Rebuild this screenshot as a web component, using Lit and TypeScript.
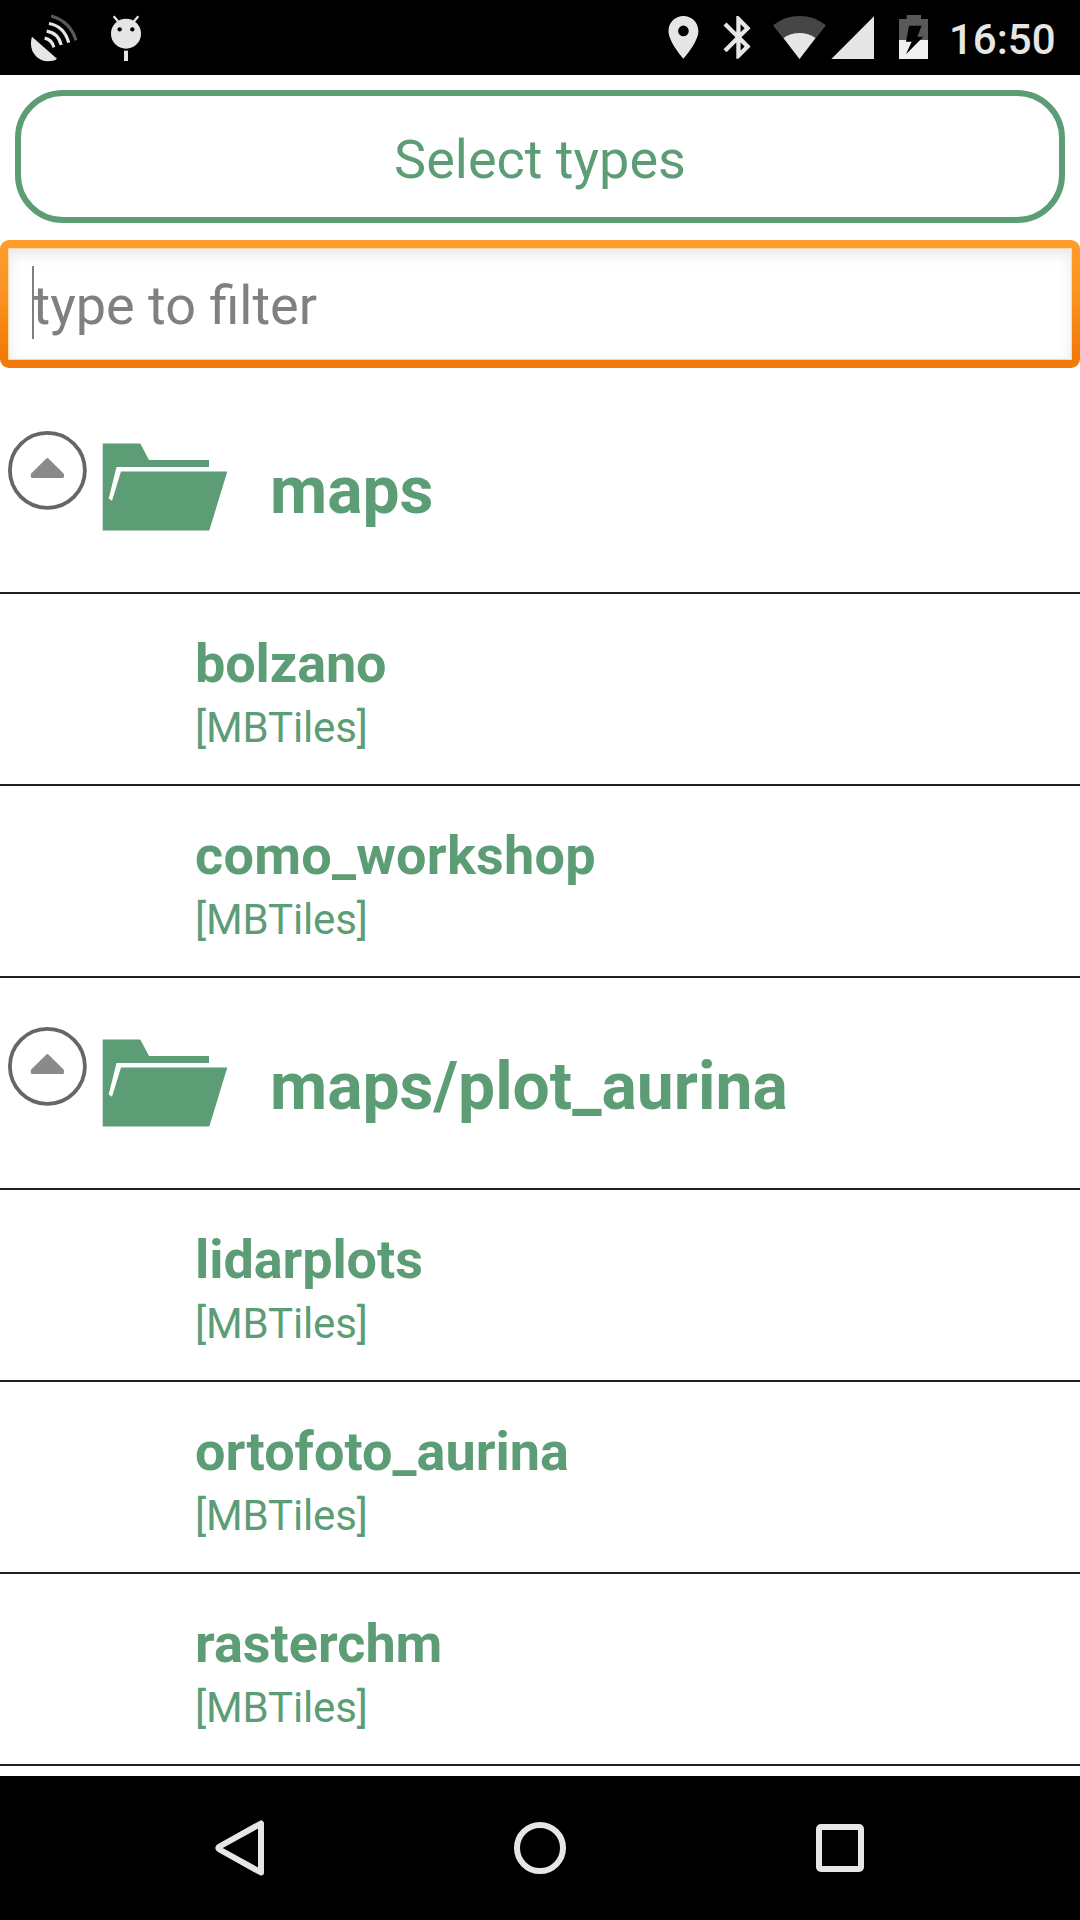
import { LitElement, html, css, svg } from "lit";
import { customElement, property, state } from "lit/decorators.js";

interface MapSource {
  name: string;
  type: string;
  tracking?: number;
}

interface MapFolder {
  path: string;
  sources: MapSource[];
}

@customElement("status-bar")
class StatusBar extends LitElement {
  @property() time = "";

  static styles = css`
    :host {
      display: flex;
      justify-content: space-between;
      height: 75px;
      background: #000;
      color: #e6e6e6;
    }
    .icons {
      display: block;
      height: 75px;
    }
    .right {
      display: flex;
    }
    .clock {
      width: 131px;
      margin-left: -1px;
      font: 500 42px/50px Roboto, sans-serif;
      padding-top: 15px;
      white-space: nowrap;
    }
  `;

  render() {
    return html`
      <svg class="icons" width="200" height="75" viewBox="0 0 600 225">
        <path fill="#e6e6e6" d="M96 110L171 176.500C166 182 153 184 144 184A52 52 0 0 1 93 132C93 124 94 115 96 110Z" />
        <g fill="none" stroke="#e6e6e6" stroke-width="9.500">
          <path d="M134 114.500Q156 119 161.500 142" />
          <path d="M140 93.500Q175 99 183.500 135" />
          <path d="M147 70.500Q193 79 206 128" />
          <path d="M153 48Q211 64 228 121" stroke="#595959" />
        </g>
        <circle cx="378" cy="101" r="45" fill="#e6e6e6" />
        <path d="M341 49L355 65M415 49L401 65" stroke="#e6e6e6" stroke-width="7" />
        <circle cx="359" cy="88" r="6.500" />
        <circle cx="397" cy="88" r="6.500" />
        <path fill="#e6e6e6" d="M372 152h12v31h-12z" />
      </svg>
      <div class="right">
        <svg class="icons" width="310" height="75" viewBox="0 0 930 225">
          <g fill="#e6e6e6">
            <path
              transform="translate(53.500 35.200) scale(6.400)"
              d="M12 2C8.130 2 5 5.130 5 9c0 5.250 7 13 7 13s7-7.750 7-13c0-3.870-3.130-7-7-7zm0 9.500a2.500 2.500 0 1 1 0-5 2.500 2.500 0 0 1 0 5z"
            />
            <path
              transform="translate(218.500 35.200) scale(6.400)"
              d="M17.710 7.710L12 2h-1v7.590L6.410 5 5 6.410 10.590 12 5 17.590 6.410 19 11 14.410V22h1l5.710-5.710-4.300-4.290 4.300-4.290zM13 5.830l1.880 1.880L13 9.590V5.830zm1.880 10.460L13 18.170v-3.760l1.880 1.880z"
            />
            <path fill="#464646" d="M478.500 177L399 76Q434 48 478.500 48T558 76Z" />
            <path d="M478.500 177L430.500 114Q452 99 478.500 99T526.500 114Z" />
            <path d="M574 177L702 49V177Z" />
          </g>
          <path fill="#595959" d="M800 45h43v12h21v63h-87v-63h23z" />
          <path fill="#f0f0f0" d="M777 120h87v57h-87z" />
          <path d="M807 77H845L832 110H850L798 163L815 125H798Z" />
        </svg>
        <span class="clock">${this.time}</span>
      </div>
    `;
  }
}

@customElement("folder-header")
class FolderHeader extends LitElement {
  @property() path = "";
  @property({ type: Boolean }) collapsed = false;

  static styles = css`
    :host {
      display: flex;
      box-sizing: border-box;
      height: 212px;
      border-bottom: 2px solid #231f20;
      color: #5d9d76;
    }
    .toggle {
      display: block;
      width: 80px;
      height: 80px;
      margin: 48px 16px 0 7px;
      flex: none;
    }
    .collapsed {
      transform: scaleY(-1);
    }
    .folder {
      display: block;
      width: 126px;
      height: 88px;
      margin: 61px 42px 0 -1px;
      flex: none;
    }
    .name {
      font: 700 66px/78px Roboto, sans-serif;
      padding-top: 70px;
      white-space: nowrap;
    }
  `;

  render() {
    return html`
      <svg class="toggle ${this.collapsed ? "collapsed" : ""}" viewBox="0 0 80 80">
        <circle cx="40.400" cy="40.300" r="37.500" fill="none" stroke="#666" stroke-width="3.800" />
        <path d="M40.400 29.500L55.500 44.500V46.500H25.300V44.500Z" fill="#8a8a8a" stroke="#8a8a8a" stroke-width="3" stroke-linejoin="round" />
      </svg>
      <svg class="folder" viewBox="102 443 126 88">
        <path
          fill="#5d9d76"
          d="M102.700 443.500H140.300L149 460H209V467H116.500L108.700 498.500L112 500.700L121 471.400H227.300L209.300 530.500H102.700Z"
        />
      </svg>
      <span class="name">${this.path}</span>
    `;
  }
}

@customElement("source-row")
class SourceRow extends LitElement {
  @property() name = "";
  @property() type = "";
  @property({ type: Number }) tracking = 0;

  static styles = css`
    :host {
      display: flex;
      flex-direction: column;
      gap: 7px;
      box-sizing: border-box;
      height: 192px;
      padding: 38px 0 0 195px;
      border-bottom: 2px solid #231f20;
      color: #5d9d76;
      font-family: Roboto, sans-serif;
    }
    .name {
      font-size: 54px;
      line-height: 64px;
      font-weight: 700;
    }
    .type {
      font-size: 42px;
      line-height: 50px;
      letter-spacing: -0.15px;
    }
  `;

  render() {
    return html`
      <span class="name" style="letter-spacing:${this.tracking}px">${this.name}</span>
      <span class="type">[${this.type}]</span>
    `;
  }
}

@customElement("nav-bar")
class NavBar extends LitElement {
  static styles = css`
    :host {
      display: flex;
      justify-content: center;
      align-items: center;
      height: 144px;
      background: #000;
      flex: none;
    }
    .key {
      display: flex;
      justify-content: center;
      width: 300px;
    }
    .glyph {
      width: 64px;
      height: 64px;
      fill: none;
      stroke: #e6e6e6;
      stroke-width: 6;
      stroke-linejoin: round;
    }
  `;

  private key(shape: unknown) {
    return html`<div class="key"><svg class="glyph" viewBox="0 0 64 64">${shape}</svg></div>`;
  }

  render() {
    return [
      this.key(svg`<path d="M53 7.500V56.500L11.500 33.500Q9 32 11.500 30.500Z" />`),
      this.key(svg`<circle cx="32" cy="32" r="23" />`),
      this.key(svg`<rect x="11" y="11" width="42" height="42" rx="2" />`),
    ];
  }
}

@customElement("app-root")
class AppRoot extends LitElement {
  @state() private folders: MapFolder[] = [
    {
      path: "maps",
      sources: [
        { name: "bolzano", type: "MBTiles", tracking: -0.12 },
        { name: "como_workshop", type: "MBTiles", tracking: 0.26 },
      ],
    },
    {
      path: "maps/plot_aurina",
      sources: [
        { name: "lidarplots", type: "MBTiles", tracking: -0.1 },
        { name: "ortofoto_aurina", type: "MBTiles" },
        { name: "rasterchm", type: "MBTiles" },
      ],
    },
  ];

  static styles = css`
    :host {
      display: flex;
      flex-direction: column;
      width: 1080px;
      height: 1920px;
      overflow: hidden;
      background: #fff;
      font-family: Roboto, sans-serif;
    }
    .select {
      box-sizing: border-box;
      height: 133px;
      margin: 15px 15px 0;
      border: 6px solid #5d9d76;
      border-radius: 48px;
      background: #fff;
      color: #5d9d76;
      font: 400 54px/64px Roboto, sans-serif;
      padding: 7px 0 0;
      text-align: center;
      flex: none;
    }
    .filter {
      box-sizing: border-box;
      height: 128px;
      margin-top: 17px;
      padding: 8px;
      border-radius: 9px;
      background: linear-gradient(#ff9d2a, #fb9422 40%, #f27a08 90%);
      flex: none;
    }
    .field {
      display: flex;
      align-items: center;
      box-sizing: border-box;
      height: 112px;
      padding: 0 24px 3px;
      background: #fff;
      box-shadow: inset 0 0 0 1px #fbd9ae, inset 0 9px 16px -3px #e9e9e9, inset 0 0 14px #f3f3f3;
    }
    .caret {
      width: 2px;
      height: 73px;
      background: #808080;
      margin-right: -1.500px;
    }
    .hint {
      color: #808080;
      font-size: 54px;
      line-height: 64px;
      padding-top: 7px;
    }
    .list {
      flex: 1;
      min-height: 0;
      overflow: hidden;
      padding-top: 14px;
    }
  `;

  render() {
    return html`
      <status-bar time="16:50"></status-bar>
      <button class="select">Select types</button>
      <div class="filter">
        <div class="field"><span class="caret"></span><span class="hint">type to filter</span></div>
      </div>
      <div class="list">
        ${this.folders.map(
          (folder) => html`
            <folder-header path=${folder.path}></folder-header>
            ${folder.sources.map(
              (s) => html`<source-row name=${s.name} type=${s.type} tracking=${s.tracking ?? 0}></source-row>`
            )}
          `
        )}
      </div>
      <nav-bar></nav-bar>
    `;
  }
}
